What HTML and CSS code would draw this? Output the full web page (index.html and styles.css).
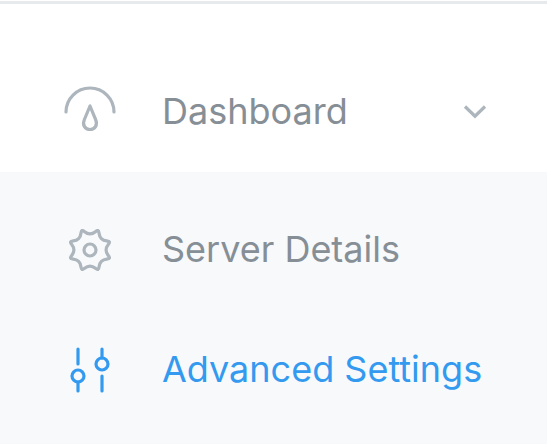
FILE: index.html
```html
<!DOCTYPE html>
<html lang="en">
<head>
<meta charset="utf-8">
<title>Dashboard</title>
<link rel="stylesheet" href="styles.css">
</head>
<body>
<nav class="menu">
  <a class="item item-parent">
    <svg class="icon" viewBox="-30 -30 60 60"><path d="M-24 0A24 24 0 0 1 24 0M0-6L-5.600 7.500C-8.200 13.500-4.500 17.500 0 17.500S8.200 13.500 5.600 7.500Z"/></svg>
    <span class="label">Dashboard</span>
    <svg class="chevron" viewBox="0 0 24 16"><path d="M2 2.500L12 12.200L22 2.500"/></svg>
  </a>
  <div class="submenu">
    <a class="item">
      <svg class="icon" viewBox="-30 -30 60 60">
        <defs><path id="tooth" d="M-8-19.200C-5.900-20.100-5-16.100 0-16.100S5.900-20.100 8-19.200"/></defs>
        <use href="#tooth"/><use href="#tooth" transform="rotate(45)"/><use href="#tooth" transform="rotate(90)"/><use href="#tooth" transform="rotate(135)"/><use href="#tooth" transform="rotate(180)"/><use href="#tooth" transform="rotate(225)"/><use href="#tooth" transform="rotate(270)"/><use href="#tooth" transform="rotate(315)"/>
        <circle r="6"/>
      </svg>
      <span class="label">Server Details</span>
    </a>
    <a class="item item-active">
      <svg class="icon" viewBox="-30 -30 60 60"><path d="M-12-21V-6M-12 12V21M12-21V-12M12 6V21"/><circle cx="-12" cy="6" r="6"/><circle cx="12" cy="-6" r="6"/></svg>
      <span class="label">Advanced Settings</span>
    </a>
  </div>
</nav>
</body>
</html>
```
FILE: styles.css
```css
* { box-sizing: border-box; }
body { margin: 0; background: #fff; font-family: Inter, sans-serif; }
.menu { height: 444px; display: flex; flex-direction: column; border-top: 1px solid #fff; overflow: hidden; }
.menu::before { content: ""; height: 3px; background: #e7eaed; flex: none; }
.item { display: flex; align-items: center; height: 120px; padding: 0 60px; color: #868e96; }
.item-parent { height: 168px; padding-top: 48px; }
.submenu { flex: 1; padding-top: 18px; background: #f8f9fb; }
.icon { width: 60px; height: 60px; flex: none; color: #adb5bd; }
.icon, .chevron { fill: none; stroke: currentColor; stroke-width: 3.2; stroke-linecap: round; stroke-linejoin: round; }
.label { margin-left: 42px; padding-bottom: 2px; font-size: 36px; line-height: 48px; white-space: nowrap; }
.chevron { width: 24px; height: 16px; margin-left: auto; color: #adb5bd; stroke-linecap: butt; stroke-linejoin: miter; }
.item-active, .item-active .icon { color: #339af0; }
```
